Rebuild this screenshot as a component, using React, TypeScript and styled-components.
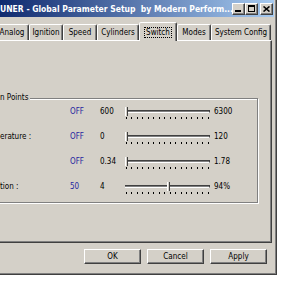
import React from 'react';
import styled, { createGlobalStyle } from 'styled-components';

const FACE = '#d4d0c8';
const FONT = '"DejaVu Sans Condensed", "Liberation Sans", Arial, sans-serif';

const GlobalStyle = createGlobalStyle`
  html, body {
    margin: 0;
    padding: 0;
    background: #fff;
  }
  body {
    font-family: ${FONT};
  }
  #root {
    width: 300px;
    height: 300px;
    overflow: hidden;
  }
`;

interface SwitchRow {
  label: string;
  status: string;
  min: string;
  max: string;
  pos: number;
}

const rows: SwitchRow[] = [
  { label: '', status: 'OFF', min: '600', max: '6300', pos: 0 },
  { label: 'erature :', status: 'OFF', min: '0', max: '120', pos: 0 },
  { label: '', status: 'OFF', min: '0.34', max: '1.78', pos: 0 },
  { label: 'tion :', status: '50', min: '4', max: '94%', pos: (50 - 4) / 90 },
];

const tabs = [
  { name: 'Analog', w: 34 },
  { name: 'Ignition', w: 34 },
  { name: 'Speed', w: 34 },
  { name: 'Cylinders', w: 42 },
  { name: 'Switch', w: 38, active: true },
  { name: 'Modes', w: 34 },
  { name: 'System Config', w: 60 },
];

// window is cropped on the left and top, like the screenshot
const Window = styled.div`
  box-sizing: border-box;
  width: 289px;
  height: 278px;
  margin: -3px 0 0 -12px;
  padding: 2px;
  display: flex;
  flex-direction: column;
  background: ${FACE};
  border: 1px solid;
  border-color: ${FACE} #404040 #404040 ${FACE};
  box-shadow: inset 1px 1px #fff, inset -1px -1px #808080;
`;

const TitleBar = styled.div`
  height: 17px;
  display: flex;
  align-items: center;
  padding: 0 1px 0 9px;
  background: linear-gradient(to right, #0a246a, #a6caf0);
`;

const Title = styled.span`
  flex: 1;
  color: #fff;
  font-size: 8.5px;
  font-weight: bold;
  white-space: pre;
  overflow: hidden;
`;

const CaptionButton = styled.div<{ $gap?: boolean }>`
  box-sizing: border-box;
  width: 13px;
  height: 12px;
  margin-left: ${({ $gap }) => ($gap ? 2 : 0)}px;
  display: flex;
  align-items: center;
  justify-content: center;
  background: ${FACE};
  border: 1px solid;
  border-color: #fff #404040 #404040 #fff;
  box-shadow: inset -1px -1px #808080;
`;

const Body = styled.div`
  flex: 1;
  display: flex;
  flex-direction: column;
  padding: 5px 2px 8px 0;
`;

const TabStrip = styled.div`
  position: relative;
  z-index: 1;
  height: 18px;
  display: flex;
  align-items: flex-end;
  padding-left: 4px;
`;

const Tab = styled.div<{ $w: number; $active?: boolean }>`
  box-sizing: border-box;
  width: ${({ $w }) => $w}px;
  height: ${({ $active }) => ($active ? 19 : 16)}px;
  margin-bottom: ${({ $active }) => ($active ? -1 : 0)}px;
  display: flex;
  align-items: center;
  justify-content: center;
  background: ${FACE};
  border: 1px solid;
  border-bottom: none;
  border-color: #fff #404040 transparent #fff;
  border-radius: 2px 2px 0 0;
  box-shadow: inset -1px 0 #808080;
  font-size: 8px;
  color: #000;
  white-space: nowrap;
`;

const FocusLabel = styled.span`
  border: 1px dotted #000;
  padding: 0 1px;
  line-height: 9px;
`;

const Panel = styled.div`
  box-sizing: border-box;
  height: 203px;
  padding: 57px 13px 0 5px;
  border: 1px solid;
  border-color: #fff #404040 #404040 #fff;
  box-shadow: inset -1px -1px #808080;
`;

const GroupBox = styled.div`
  position: relative;
  box-sizing: border-box;
  height: 105px;
  padding: 0 0 0 2px;
  border: 1px solid #808080;
  box-shadow: inset 1px 1px #fff, 1px 1px #fff;
`;

const Legend = styled.span`
  position: absolute;
  top: -6px;
  left: 2px;
  padding-right: 2px;
  background: ${FACE};
  font-size: 8px;
  line-height: 10px;
  white-space: nowrap;
`;

const Row = styled.div`
  height: 25px;
  display: grid;
  grid-template-columns: 70px 30px 25px 89px auto;
  align-items: center;
  font-size: 8px;
  color: #000;
  white-space: nowrap;
`;

const Status = styled.span`
  color: #2626a0;
`;

const Slider = styled.div`
  position: relative;
  box-sizing: border-box;
  width: 85px;
  height: 14px;
  padding-top: 5px;
  display: flex;
  flex-direction: column;
  gap: 4px;
`;

const Track = styled.div`
  box-sizing: border-box;
  height: 3px;
  border-top: 1px solid #404040;
  border-bottom: 1px solid #fff;
  border-right: 1px solid #404040;
  background: #808080;
`;

const Ticks = styled.div`
  display: flex;
  justify-content: space-between;
  padding: 0 1px;
`;

const Tick = styled.span`
  width: 1px;
  height: 2px;
  background: #000;
`;

const Thumb = styled.div`
  position: absolute;
  top: 2px;
  box-sizing: border-box;
  width: 3px;
  height: 9px;
  background: ${FACE};
  border-left: 1px solid #fff;
  border-right: 1px solid #404040;
`;

const ButtonRow = styled.div`
  display: flex;
  justify-content: flex-end;
  gap: 6px;
  margin-top: 6px;
  padding-right: 5px;
`;

const Button = styled.button`
  box-sizing: border-box;
  width: 57px;
  height: 15px;
  padding: 0;
  font: 8px ${FONT};
  color: #000;
  background: ${FACE};
  border: 1px solid;
  border-color: #fff #404040 #404040 #fff;
  box-shadow: inset -1px -1px #808080;
`;

const MinIcon = () => (
  <svg width="7" height="7" viewBox="0 0 7 7">
    <rect x="0" y="5" width="6" height="2" fill="#000" />
  </svg>
);

const MaxIcon = () => (
  <svg width="7" height="7" viewBox="0 0 7 7">
    <path d="M0 0H7V7H0Z M1 2V6H6V2Z" fill="#000" fillRule="evenodd" />
  </svg>
);

const CloseIcon = () => (
  <svg width="7" height="6" viewBox="0 0 7 6">
    <path d="M0.5 0.5L6.5 5.5M6.5 0.5L0.5 5.5" stroke="#000" strokeWidth="1.6" />
  </svg>
);

const TrackBar: React.FC<{ pos: number }> = ({ pos }) => (
  <Slider>
    <Track />
    <Ticks>
      {Array.from({ length: 16 }).map((_, i) => (
        <Tick key={i} />
      ))}
    </Ticks>
    <Thumb style={{ left: Math.round(pos * 82) }} />
  </Slider>
);

export default function App() {
  return (
    <>
      <GlobalStyle />
      <Window>
        <TitleBar>
          <Title>UNER - Global Parameter Setup  by Modern Perform...</Title>
          <CaptionButton>
            <MinIcon />
          </CaptionButton>
          <CaptionButton>
            <MaxIcon />
          </CaptionButton>
          <CaptionButton $gap>
            <CloseIcon />
          </CaptionButton>
        </TitleBar>
        <Body>
          <TabStrip>
            {tabs.map((t) => (
              <Tab key={t.name} $w={t.w} $active={t.active}>
                {t.active ? <FocusLabel>{t.name}</FocusLabel> : t.name}
              </Tab>
            ))}
          </TabStrip>
          <Panel>
            <GroupBox>
              <Legend>n Points</Legend>
              {rows.map((r, i) => (
                <Row key={i}>
                  <span>{r.label}</span>
                  <Status>{r.status}</Status>
                  <span>{r.min}</span>
                  <TrackBar pos={r.pos} />
                  <span>{r.max}</span>
                </Row>
              ))}
            </GroupBox>
          </Panel>
          <ButtonRow>
            <Button>OK</Button>
            <Button>Cancel</Button>
            <Button>Apply</Button>
          </ButtonRow>
        </Body>
      </Window>
    </>
  );
}
